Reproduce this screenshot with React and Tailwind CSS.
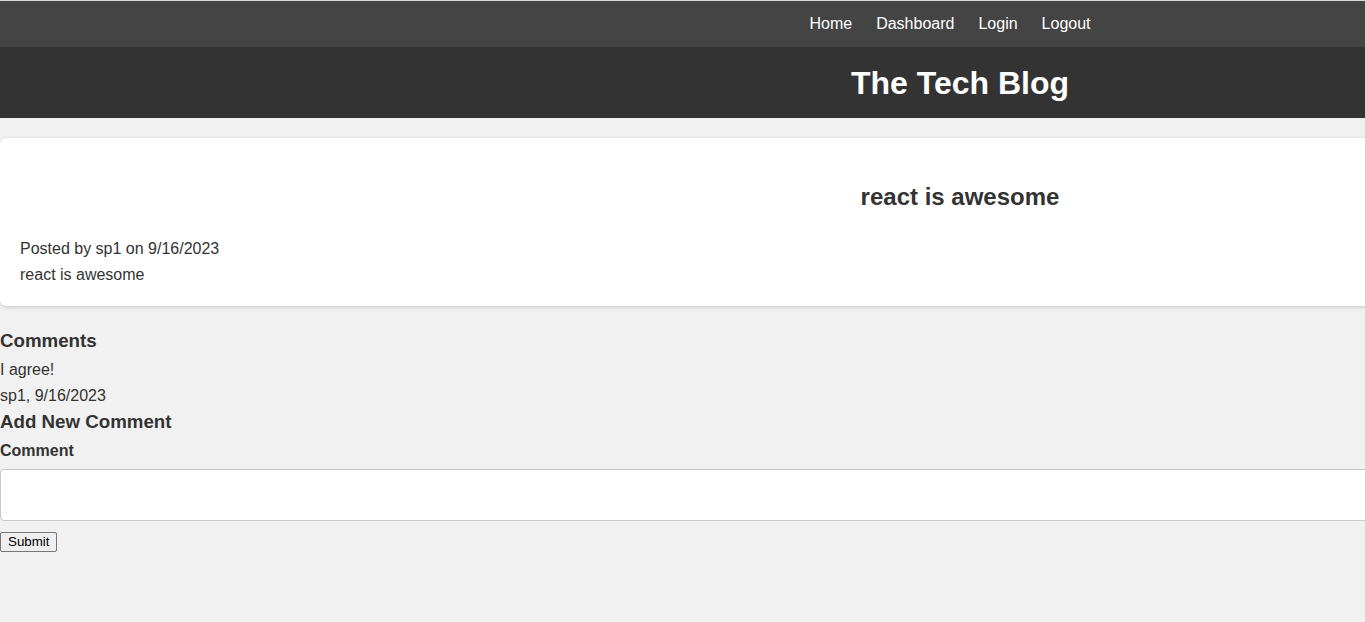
import React from "react";

const links = ["Home", "Dashboard", "Login", "Logout"];

const App = () => {
  return (
    <div className="w-full min-h-screen overflow-hidden bg-[#f1f1f1] text-[#333] font-['Liberation_Sans',Arial,sans-serif] border-t border-[#d9d9d9]">
      <div className="w-[1920px]">
        <nav className="h-[46px] bg-[#444] flex items-center justify-center pr-5">
          {links.map((l) => (
            <a key={l} href="#" className="px-3 text-white text-base leading-6">
              {l}
            </a>
          ))}
        </nav>
        <header className="h-[71px] bg-[#333] flex items-center justify-center">
          <h1 className="text-white text-[32px] font-bold leading-none">The Tech Blog</h1>
        </header>

        <main>
          <div className="mt-5 bg-white rounded-[6px] shadow-[0_1px_4px_rgba(0,0,0,0.18)] px-5 pt-[45px] pb-[18px]">
            <h2 className="text-center text-[24px] font-bold leading-7">react is awesome</h2>
            <p className="mt-[25px] text-base leading-[26px]">Posted by sp1 on 9/16/2023</p>
            <p className="text-base leading-[26px]">react is awesome</p>
          </div>

          <h3 className="mt-[22px] text-[18.72px] font-bold leading-[26px]">Comments</h3>
          <p className="mt-[3px] text-base leading-[26px]">I agree!</p>
          <p className="text-base leading-[26px]">sp1, 9/16/2023</p>
          <h3 className="text-[18.72px] font-bold leading-[26px]">Add New Comment</h3>
          <form>
            <label className="block mt-[3px] text-base font-bold leading-[26px]">Comment</label>
            <input
              type="text"
              className="block mt-[5px] w-full h-[52px] bg-white border border-[#c8c8c8] rounded-[4px] px-2"
            />
            <button
              type="button"
              className="block mt-[11px] h-[20px] px-[7px] text-[13.33px] leading-none text-black bg-[#efefef] border border-[#767676] rounded-[2px]"
            >
              Submit
            </button>
          </form>
        </main>
      </div>
    </div>
  );
};

export default App;
